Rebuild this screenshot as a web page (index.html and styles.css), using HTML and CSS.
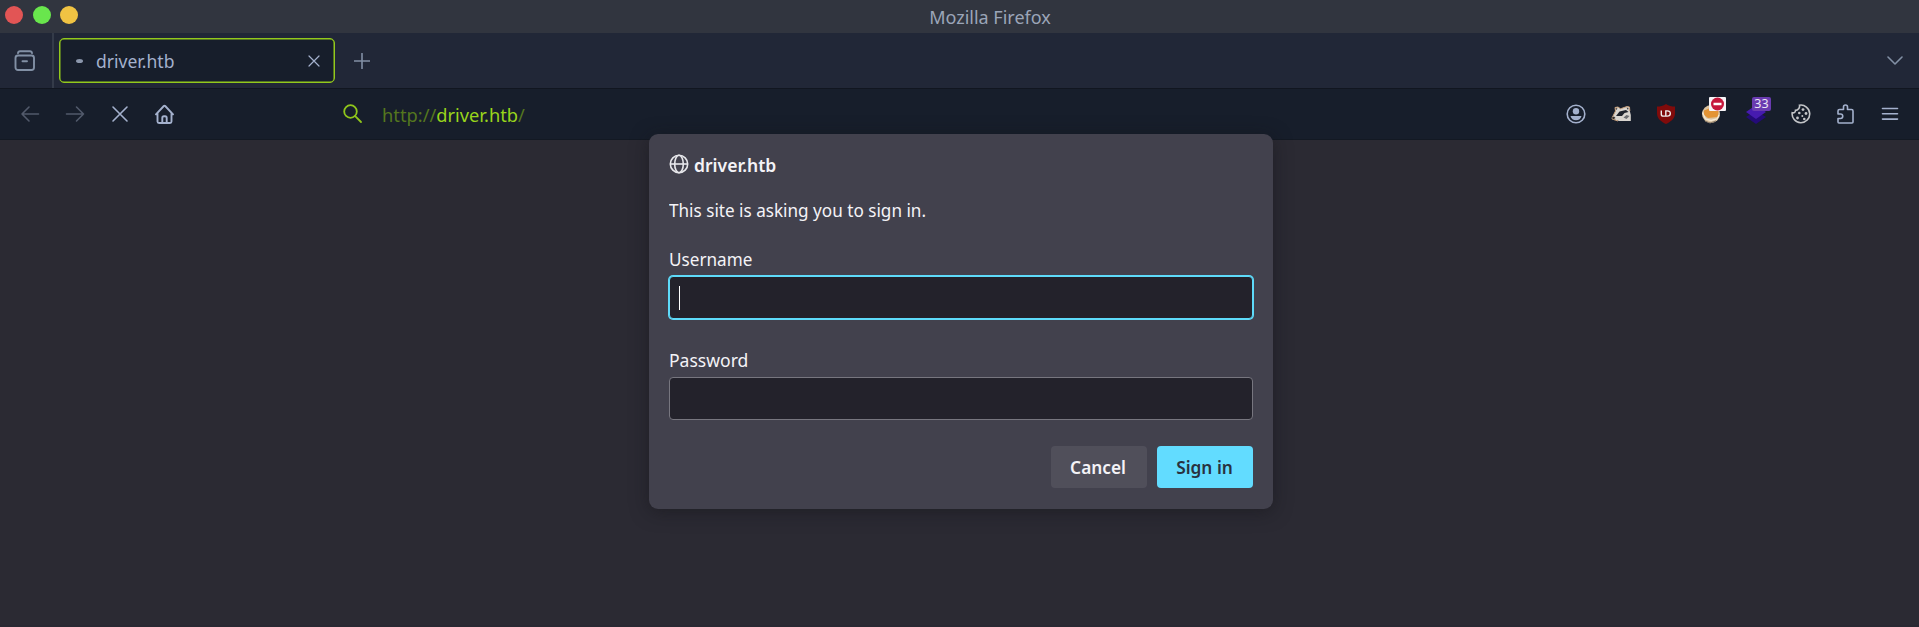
FILE: index.html
```html
<!DOCTYPE html>
<html lang="en">
<head>
<meta charset="utf-8">
<title>Mozilla Firefox</title>
<link rel="stylesheet" href="styles.css">
</head>
<body>
<div class="window">
  <header class="titlebar">
    <div class="lights"><i class="light red"></i><i class="light green"></i><i class="light yellow"></i></div>
    <span class="title">Mozilla Firefox</span>
  </header>
  <div class="tabstrip">
    <div class="view">
      <svg width="22" height="22" viewBox="0 0 22 22" class="line muted bold"><path d="M4 3.200C4.200 1.800 5 1.300 6 1.300h10c1 0 1.800.5 2 1.900"/><rect x="1.500" y="5.500" width="18.500" height="14.500" rx="2.500"/><path d="M8.500 11.300h4.500"/></svg>
    </div>
    <div class="tab">
      <i class="loading"></i><span class="tab-label"><span class="text">driver.htb</span></span>
      <svg width="12" height="12" viewBox="0 0 12 12" class="line thin"><path d="M1 1l10 10M11 1L1 11"/></svg>
    </div>
    <svg class="line muted plus" width="16" height="16" viewBox="0 0 16 16"><path d="M8 .5v15M.5 8h15"/></svg>
    <svg class="line muted chevron" width="16" height="10" viewBox="0 0 16 10"><path d="M1 1l7 7 7-7"/></svg>
  </div>
  <nav class="toolbar">
    <div class="nav-buttons">
      <svg class="line dim" width="20" height="20" viewBox="0 0 20 20"><path d="M18.500 10H2M9 3L2 10l7 7"/></svg>
      <svg class="line dim" width="20" height="20" viewBox="0 0 20 20"><path d="M1.500 10h17M11.500 3l7 7-7 7"/></svg>
      <svg class="line" width="20" height="20" viewBox="0 0 20 20"><path d="M3 3l14 14M17 3L3 17"/></svg>
      <svg class="line bold" width="20" height="20" viewBox="0 0 20 20"><path d="M1 10.300L8.800 2q.7-.7 1.400 0L18 10.300M2.500 9v8.500q0 1.500 1.500 1.500h11q1.500 0 1.500-1.500V9M7.300 19v-5q0-1.700 1.600-1.700h1.200q1.600 0 1.600 1.700v5"/></svg>
    </div>
    <div class="address">
      <svg class="line lime" width="20" height="20" viewBox="0 0 20 20"><circle cx="7.500" cy="7.500" r="6.300"/><path d="M12.200 12.200l5.800 5.800"/></svg>
      <span class="url">http://<b>driver.htb</b>/</span>
    </div>
    <div class="extensions">
      <svg width="20" height="20" viewBox="0 0 20 20"><circle cx="10" cy="10" r="8.800" fill="none" stroke="#a4b1cd" stroke-width="1.600"/><circle cx="10" cy="7.200" r="3.200" fill="#a4b1cd"/><path d="M4.500 12h11c-.6 2.800-2.700 4.300-5.500 4.300S5.100 14.800 4.500 12z" fill="#a4b1cd"/></svg>
      <svg width="20" height="20" viewBox="0 0 20 20"><path d="M.8 14.500L3 10l1.500-3L4 3.500 7 3l2.500 1.800L16 2.500l2.500.5.300 4 1 4v6H8l-3-1z" fill="#d9d5d0"/><path d="M.8 14.500L3 10l1.500-3L4 3.500 7 3l2.500 1.800L16 2.500l2.500.5.300 4M1 15l6 2" fill="none" stroke="#c9a27e"/><path d="M5 12l3.500-4.500L15 6l2.500 2-4 1-2.500 3z" fill="#20242d"/><path d="M12.500 13.500l3-2.500 3 1-3 3z" fill="#6d6e72"/><path d="M1 13.500l2-1 1.500 1.500L2 15.500z" fill="#342e2b"/><path d="M4.500 4l2 .5-1 1.500zM15.500 3.500l2 .5-.5 2z" fill="#3b3430"/></svg>
      <svg width="20" height="20" viewBox="0 0 20 20"><path d="M10 0c3 2 5.500 2.500 9 2.500v7c0 5-4.500 8.500-9 10.500-4.500-2-9-5.500-9-10.500v-7C4.500 2.500 7 2 10 0z" fill="#800b0b"/><path d="M5.300 6.500v3.700q0 1.900 2 1.900h4q3 0 3-2.600t-3-2.600H9.800v5" fill="none" stroke="#eee" stroke-width="1.400"/></svg>
      <div class="ext">
        <svg width="20" height="20" viewBox="0 0 20 20"><circle cx="10" cy="10" r="9" fill="#dcc4a0"/><path d="M3 6.500l5-2 9.500 2-.5 6.500-10 1-4-3z" fill="#e49434"/><path d="M1.500 8.500l3 6.500 5.500 1.500 6-1.500 2-4" stroke="#f5ead6" stroke-width="1.300" fill="none"/><path d="M4 17l5 2 6-2" stroke="#8b7b6a" fill="none"/></svg>
        <svg class="block-badge" width="17" height="14" viewBox="0 0 17 14"><rect width="17" height="14" rx="1" fill="#f7f4f7"/><circle cx="8.500" cy="7" r="6.500" fill="#c5173b"/><path d="M4.500 7h8" stroke="#fff" stroke-width="2.500"/></svg>
      </div>
      <div class="ext">
        <svg width="20" height="20" viewBox="0 0 20 20"><path d="M0 13l10-6 10 6-10 7z" fill="#240b78"/><path d="M0 8l10-7 10 7-10 7z" fill="#461baf"/></svg>
        <span class="count">33</span>
      </div>
      <svg width="20" height="20" viewBox="0 0 20 20"><path d="M8.500 1.200a8.800 8.800 0 1 1-7.300 7.500c2 .5 3.300-.4 3.300-2.300 2.500 0 4.500-2.400 4-5.200z" fill="none" stroke="#c3c5c8" stroke-width="1.600"/><g fill="#c3c5c8"><circle cx="12" cy="5.600" r="1.400"/><circle cx="8.300" cy="9" r="1.300"/><circle cx="15" cy="9.500" r="1.400"/><circle cx="11.300" cy="12" r="1"/><circle cx="6.500" cy="14" r="1.400"/><circle cx="13.300" cy="15" r="1.300"/></g></svg>
      <svg class="line" width="20" height="20" viewBox="0 0 20 20"><path d="M3.500 5.500H7.500V3a2 2 0 0 1 4 0v2.500h4q1.500 0 1.500 1.500v11q0 1-1 1H3q-1 0-1-1v-3.500h2.500a2 2 0 0 0 0-4.500H2V7Q2 5.500 3.500 5.500z"/></svg>
      <svg class="line" width="18" height="16" viewBox="0 0 18 16"><path d="M1.500 2.500h15M1.500 7.800h15M1.500 13.100h15"/></svg>
    </div>
  </nav>
  <main class="page">
    <form class="dialog">
      <div class="origin">
        <svg width="20" height="20" viewBox="0 0 20 20" class="globe"><circle cx="10" cy="10" r="8.700"/><ellipse cx="10" cy="10" rx="4.300" ry="8.700"/><path d="M1.300 10h17.400"/></svg>
        <b class="text">driver.htb</b>
      </div>
      <p class="message"><span class="text narrow">This site is asking you to sign in.</span></p>
      <label class="label user-label"><span class="text narrow">Username</span></label>
      <div class="field focused"><i class="caret"></i></div>
      <label class="label pass-label"><span class="text">Password</span></label>
      <div class="field"></div>
      <div class="actions">
        <button type="button" class="button cancel"><span class="text mid">Cancel</span></button>
        <button type="button" class="button primary"><span class="text mid">Sign in</span></button>
      </div>
    </form>
  </main>
</div>
</body>
</html>
```
FILE: styles.css
```css
* { box-sizing: border-box; }
body { margin: 0; font-family: "Noto Sans", sans-serif; font-size: 18.600px; color: #f4f3f7; }
svg { display: block; flex: none; }
.text { display: inline-block; transform: scaleX(.943); transform-origin: 0 50%; }
.narrow { transform: scaleX(.921); }
.mid { transform: scaleX(.93); transform-origin: 50% 50%; }
.window { width: 1919px; height: 627px; display: flex; flex-direction: column; background: #2b2a33; overflow: hidden; }
.titlebar { height: 33px; flex: none; display: grid; grid-template-columns: 1fr auto 1fr; align-items: center; background: #31353f; color: #9ba5b8; font-size: 18px; }
.lights { display: flex; gap: 9.500px; padding: 0 0 3px 5px; }
.light { width: 18px; height: 18px; border-radius: 50%; }
.red { background: #e25555; }
.green { background: #69e64d; }
.yellow { background: #f0c343; }
.title { padding-left: 61px; }
.tabstrip { height: 56px; flex: none; display: flex; align-items: center; background: #212737; border-bottom: 1px solid #111620; }
.view { width: 54px; height: 100%; padding: 0 0 0 14px; border-right: 2px solid #343b49; display: flex; align-items: center; }
.tab { width: 276px; height: 45px; margin-left: 5px; border: 1px solid #93c91c; box-shadow: inset 0 0 0 .5px #93c91c; border-radius: 5px; background: #171e2b; display: flex; align-items: center; padding: 0 14px 0 16px; color: #a4b1cd; }
.loading { width: 7px; height: 4px; border-radius: 50%; background: #8b97ac; margin-right: 13px; }
.tab-label { flex: 1; }
.line { fill: none; stroke: #a4b1cd; stroke-width: 1.600; stroke-linecap: round; stroke-linejoin: round; }
.muted { stroke: #8290a5; }
.dim { stroke: #525a6b; }
.lime { stroke: #8fc61b; stroke-width: 1.800; }
.thin { stroke-width: 1.200; }
.bold { stroke-width: 1.900; }
.plus { margin-left: 19px; }
.chevron { margin-left: auto; margin-right: 16px; }
.toolbar { height: 51px; flex: none; display: flex; align-items: center; background: #171e2b; border-bottom: 1px solid #131923; }
.nav-buttons { width: 322px; padding-left: 20px; display: flex; gap: 25px; }
.address { flex: 1; display: flex; align-items: center; gap: 19px; padding-left: 21px; }
.url { color: #54761e; font-size: 18.300px; }
.url b { font-weight: 400; color: #99d51b; }
.extensions { display: flex; align-items: center; gap: 25px; padding-right: 20px; }
.ext { position: relative; }
.block-badge { position: absolute; left: 8px; top: -7px; }
.count { position: absolute; left: 6px; top: -7px; width: 19px; height: 14px; border-radius: 2px; background: #6a3bb0; color: #ebe6f5; font-size: 12.500px; line-height: 14px; text-align: center; }
.page { flex: 1; display: flex; justify-content: center; align-items: flex-start; padding-left: 2px; border-bottom: 2px solid #292832; }
.dialog { width: 624px; height: 375px; margin-top: -6px; padding: 19px 20px 20px; background: #42414d; border-radius: 9px; box-shadow: 0 3px 18px rgba(20,20,24,.5); position: relative; display: flex; flex-direction: column; }
.origin { height: 22px; display: flex; align-items: center; gap: 5px; font-weight: 600; }
.origin b { font-weight: 600; }
.globe { fill: none; stroke: #e7e7eb; stroke-width: 1.600; }
.message { margin: 22px 0 0; line-height: 26px; }
.label { line-height: 24px; }
.user-label { margin-top: 24px; }
.pass-label { margin-top: 29px; }
.field { height: 43px; margin-top: 5px; background: #23222b; border: 1px solid #77767f; border-radius: 4px; display: flex; align-items: center; padding-left: 9px; }
.focused { border-color: #5edbfa; box-shadow: 0 0 0 1px #5edbfa; }
.caret { width: 1px; height: 24px; background: #fff; }
.actions { margin-top: 26px; display: flex; justify-content: flex-end; gap: 10px; }
.button { width: 96px; height: 42px; border: 0; border-radius: 4px; font: 600 18.600px "Noto Sans", sans-serif; color: #f4f3f7; background: #504f5a; padding: 0 0 2px; }
.primary { background: #62dcff; color: #29323f; }
```
